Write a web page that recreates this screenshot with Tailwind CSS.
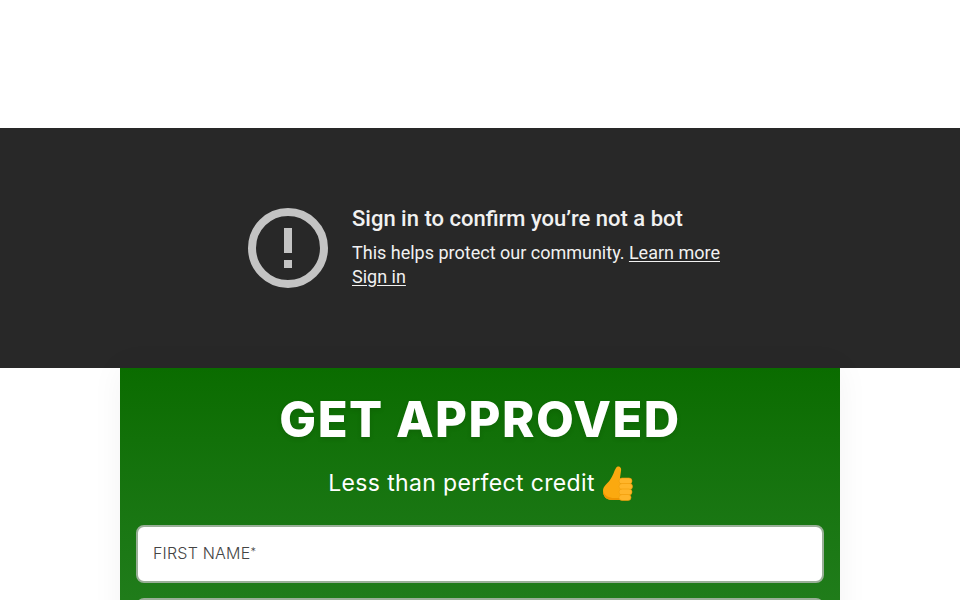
<!DOCTYPE html>
<html><head><meta charset="utf-8"><script src="https://cdn.jsdelivr.net/npm/@tailwindcss/browser@4"></script></head>
<body class="bg-white">
<div class="h-[600px] overflow-hidden flex flex-col">
<div class="h-[128px] shrink-0"></div>
<div class="h-[240px] shrink-0 bg-[#282828] flex items-center pl-[248px] font-['Roboto',sans-serif]">
  <div class="flex items-center gap-6 whitespace-nowrap">
    <svg class="w-20 h-20 shrink-0" viewBox="0 0 80 80"><circle cx="40" cy="40" r="36" fill="none" stroke="#c4c4c4" stroke-width="8"/><rect x="36" y="20" width="8" height="25" fill="#c4c4c4"/><rect x="36" y="52" width="8" height="8" fill="#c4c4c4"/></svg>
    <div>
      <div class="text-[22px] leading-7 font-medium text-[#f1f1f1] mb-[8px] -mt-[3px]">Sign in to confirm you’re not a bot</div>
      <div class="text-[18px] leading-6 text-[#f1f1f1]">This helps protect our community. <span class="underline underline-offset-2">Learn more</span><br><span class="underline underline-offset-2">Sign in</span></div>
    </div>
  </div>
</div>
<div class="w-[720px] mx-auto flex-1 px-4 bg-gradient-to-b from-[#0a6c00] to-[#24801f] shadow-[0_0_30px_rgba(0,0,0,0.05)] font-['Inter',sans-serif]">
  <h1 class="text-[49px] leading-[56px] pt-6 box-content font-extrabold text-white text-center tracking-[1.5px] [text-shadow:0_2px_5px_rgba(0,0,0,0.1)]">GET APPROVED</h1>
  <div class="mt-[17px] h-9 flex items-center justify-center gap-[5px] text-[23px] text-white tracking-[0.35px]">
    <span>Less than perfect credit</span>
    <svg class="w-[34px] h-[36px] -mr-[2px] translate-x-[1px]" viewBox="0 0 34 36"><path d="M15 3C17 0 21 2 20 6L19 13 21 35H11C5 35 2 31 2 26 2 21 6 19 9 15 12 11 13 6 15 3z" fill="#fba90f"/><path d="M2 26C2 31 5 35 11 35H21V33H13C8 33 4 31 2 26z" fill="#ee9400"/><g fill="#ffb52a" stroke="#f09c08" stroke-width=".6"><rect x="18" y="13" width="13" height="6" rx="3"/><rect x="18" y="18.5" width="13.5" height="6" rx="3"/><rect x="18" y="24" width="13" height="6" rx="3"/><rect x="18" y="29.5" width="12" height="6" rx="3"/></g></svg>
  </div>
  <div class="mt-6 h-[58px] bg-white rounded-lg border-2 border-[#9aaf98] flex items-center px-[15px] pb-[2px] text-[16px] font-light text-[#444] tracking-[0.2px]"><span>FIRST NAME<sup class="text-[11px] top-[-3px]">*</sup></span></div>
  <div class="mt-[15px] h-[58px] bg-white rounded-lg border-2 border-[#9aaf98]"></div>
</div>
</div>
</body></html>
